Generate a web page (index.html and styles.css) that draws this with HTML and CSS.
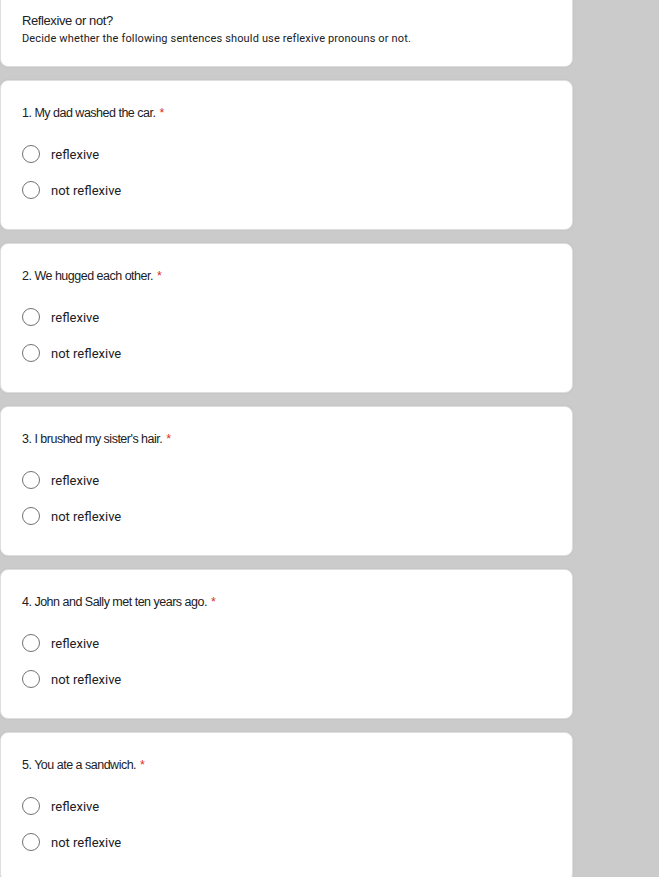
FILE: index.html
```html
<!DOCTYPE html>
<html>
<head>
<meta charset="utf-8">
<link rel="stylesheet" href="styles.css">
</head>
<body>
<div class="page">
  <div class="card intro">
    <div class="title">Reflexive or not?</div>
    <div class="desc">Decide whether the following sentences should use reflexive pronouns or not.</div>
  </div>

  <div class="card question">
    <div class="qtext">1. My dad washed the car. <span class="req">*</span></div>
    <div class="options">
      <label class="option"><span class="radio"></span><span class="olabel">reflexive</span></label>
      <label class="option"><span class="radio"></span><span class="olabel">not reflexive</span></label>
    </div>
  </div>

  <div class="card question">
    <div class="qtext">2. We hugged each other. <span class="req">*</span></div>
    <div class="options">
      <label class="option"><span class="radio"></span><span class="olabel">reflexive</span></label>
      <label class="option"><span class="radio"></span><span class="olabel">not reflexive</span></label>
    </div>
  </div>

  <div class="card question">
    <div class="qtext">3. I brushed my sister's hair. <span class="req">*</span></div>
    <div class="options">
      <label class="option"><span class="radio"></span><span class="olabel">reflexive</span></label>
      <label class="option"><span class="radio"></span><span class="olabel">not reflexive</span></label>
    </div>
  </div>

  <div class="card question">
    <div class="qtext">4. John and Sally met ten years ago. <span class="req">*</span></div>
    <div class="options">
      <label class="option"><span class="radio"></span><span class="olabel">reflexive</span></label>
      <label class="option"><span class="radio"></span><span class="olabel">not reflexive</span></label>
    </div>
  </div>

  <div class="card question">
    <div class="qtext">5. You ate a sandwich. <span class="req">*</span></div>
    <div class="options">
      <label class="option"><span class="radio"></span><span class="olabel">reflexive</span></label>
      <label class="option"><span class="radio"></span><span class="olabel">not reflexive</span></label>
    </div>
  </div>
</div>
</body>
</html>
```

FILE: styles.css
```css
html, body {
  margin: 0;
  padding: 0;
  background: #cbcbcb;
  height: 100%;
  overflow: hidden;
}
.page {
  width: 573px;
  display: flex;
  flex-direction: column;
  gap: 13px;
  margin-top: -10px;
}
.card {
  background: #ffffff;
  border: 1px solid #dedede;
  border-radius: 8px;
  box-sizing: border-box;
  box-shadow: 0 0 2px rgba(0,0,0,0.08);
}
.intro {
  height: 77px;
  padding: 22px 21px 0 21px;
}
.title {
  font-family: "Liberation Sans", Arial, sans-serif;
  font-size: 13px;
  letter-spacing: -0.4px;
  line-height: 16px;
  color: #202124;
}
.desc {
  font-family: Roboto, "Liberation Sans", sans-serif;
  font-size: 11px;
  letter-spacing: 0.15px;
  line-height: 14px;
  margin-top: 3px;
  color: #202124;
}
.question {
  height: 150px;
  padding: 23px 21px 0 21px;
  flex-shrink: 0;
}
.qtext {
  font-family: "Liberation Sans", Arial, sans-serif;
  font-size: 12.5px;
  letter-spacing: -0.5px;
  line-height: 18px;
  color: #202124;
}
.req {
  color: #d93025;
  letter-spacing: 0;
  margin-left: 1px;
}
.options {
  margin-top: 14px;
  display: flex;
  flex-direction: column;
}
.option {
  height: 36px;
  display: flex;
  align-items: center;
  gap: 11px;
}
.radio {
  width: 16px;
  height: 16px;
  border: 1.5px solid #727272;
  border-radius: 50%;
  flex-shrink: 0;
}
.olabel {
  font-family: Roboto, "Liberation Sans", sans-serif;
  font-size: 13px;
  color: #202124;
}
```
